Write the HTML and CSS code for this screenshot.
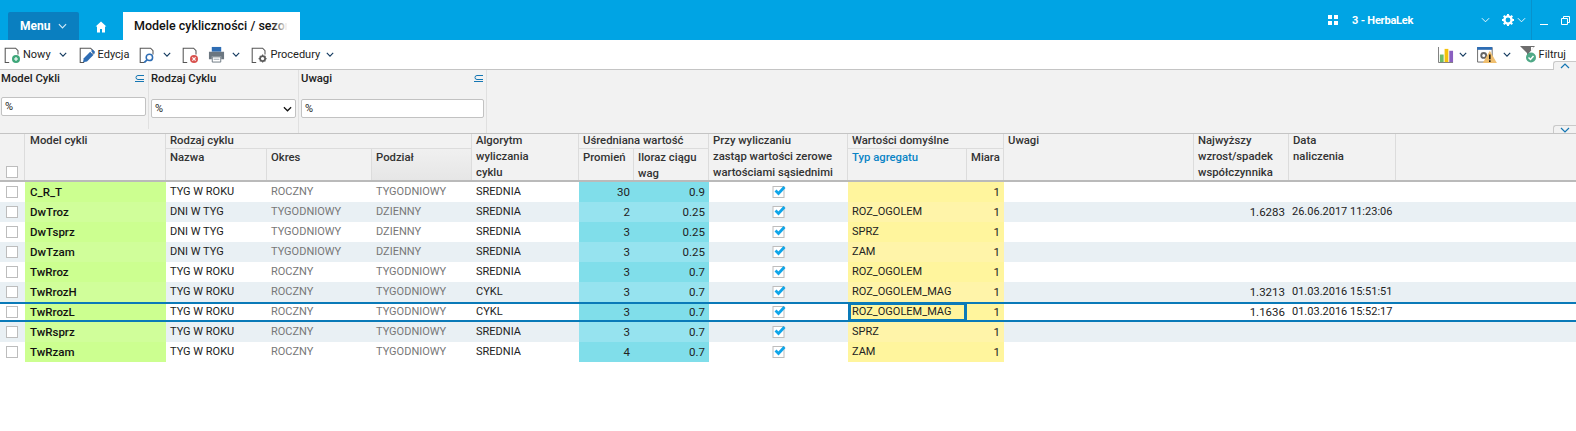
FILE: index.html
```html
<!DOCTYPE html>
<html lang="pl">
<head>
<meta charset="utf-8">
<title>Modele cykliczności / sezonowości</title>
<link rel="stylesheet" href="styles.css">
</head>
<body>
<svg class="defs" width="0" height="0" aria-hidden="true">
  <symbol id="chev" viewBox="0 0 10 6"><path d="M1 1l4 4 4-4" fill="none" stroke="#12395f" stroke-width="1.400"/></symbol>
  <symbol id="chev-w" viewBox="0 0 10 6"><path d="M1 1l4 4 4-4" fill="none" stroke="#fff" stroke-width="1"/></symbol>
  <symbol id="doc" viewBox="0 0 20 20"><path d="M6.500 19.500H1.500V1.500h13l3 3v5" fill="none" stroke="#555" stroke-width="1.300"/></symbol>
  <symbol id="chk" viewBox="0 0 14 14"><rect x="1" y="2.500" width="11" height="11" fill="#fff" stroke="#bdbdbd"/><path d="M3.500 6.500l3 3 6-6.500" fill="none" stroke="#0ea5e9" stroke-width="2.800"/></symbol>
  <symbol id="bars" viewBox="0 0 9 7"><path d="M9 .5H3a2 2 0 0 0 0 4h6M0 6.500h9" fill="none" stroke="#1476b3"/></symbol>
</svg>

<header class="topbar">
  <div class="menu-btn">Menu <svg class="ic-chev-m" viewBox="0 0 10 6"><path d="M1 1l4 4 4-4" fill="none" stroke="#cfe9f7" stroke-width="1.300"/></svg></div>
  <div class="home"><svg viewBox="0 0 12 12" width="12" height="12"><path d="M6 .5L.6 5.600H2V11.500h3V8h2v3.500h3V5.600h1.400z" fill="#fff"/></svg></div>
  <div class="tab"><span>Modele cykliczności / sezonowości</span></div>
  <div class="top-right">
    <svg class="apps" viewBox="0 0 10 10" width="10" height="10"><path d="M0 0h4v4H0zM6 0h4v4H6zM0 6h4v4H0zM6 6h4v4H6z" fill="#fff"/></svg>
    <span class="company">3 - HerbaLek</span>
    <svg class="chev-w1"><use href="#chev-w"/></svg>
    <svg class="gear" viewBox="0 0 12 12" width="12" height="12"><circle cx="6" cy="6" r="3.600" fill="none" stroke="#fff" stroke-width="2.400"/><path d="M6 0v2M6 10v2M0 6h2M10 6h2M1.700 1.700l1.400 1.400M8.900 8.900l1.400 1.400M1.700 10.300l1.400-1.400M8.900 3.100l1.400-1.400" stroke="#fff" stroke-width="2"/></svg>
    <svg class="chev-w2"><use href="#chev-w"/></svg>
    <div class="winctl">
      <span class="minimize"></span>
      <svg viewBox="0 0 9 9" width="9" height="9"><path d="M2.500 2.500V.5h6v6h-2M.5 2.500h6v6h-6z" fill="none" stroke="#fff"/></svg>
    </div>
  </div>
</header>

<nav class="toolbar">
  <div class="tb-left">
    <span class="tb-item"><svg class="ic" viewBox="0 0 20 20"><use href="#doc"/><circle cx="15" cy="15" r="5" fill="#3fa77a"/><path d="M15 12.500v5M12.500 15h5" stroke="#fff" stroke-width="1.400"/></svg>Nowy</span>
    <svg class="tb-chev c1"><use href="#chev"/></svg>
    <span class="tb-item i2"><svg class="ic" viewBox="0 0 20 20"><use href="#doc"/><path d="M5 19l1-5 8-8 4 4-8 8z" fill="#2e6db4"/><path d="M15 5l2-2 3 3-1 3z" fill="#2e6db4"/></svg>Edycja</span>
    <span class="tb-item i3"><svg class="ic" viewBox="0 0 20 20"><use href="#doc"/><circle cx="13" cy="13" r="4" fill="#fff" stroke="#2e6db4" stroke-width="1.900"/><path d="M10 16l-3.500 3.500" stroke="#2e6db4" stroke-width="2.200"/></svg></span>
    <svg class="tb-chev c3"><use href="#chev"/></svg>
    <span class="tb-item i4"><svg class="ic" viewBox="0 0 20 20"><use href="#doc"/><circle cx="15" cy="15" r="5" fill="#d9534f"/><path d="M13 13l4 4M17 13l-4 4" stroke="#fff" stroke-width="1.500"/></svg></span>
    <span class="tb-item i5"><svg class="ic printer" viewBox="0 0 18 18"><path d="M4 1h10v5H4z" fill="#2e6db4"/><path d="M1 6h16v8h-3v-3H4v3H1z" fill="#6b7680"/><path d="M4.500 11.500h9v5.500h-9z" fill="#fff" stroke="#6b7680"/><path d="M6 14h6" stroke="#9aa3ab"/></svg></span>
    <svg class="tb-chev c5"><use href="#chev"/></svg>
    <span class="tb-item i6"><svg class="ic" viewBox="0 0 20 20"><use href="#doc"/><circle cx="14.500" cy="14.500" r="3.200" fill="none" stroke="#5b5b5b" stroke-width="2.200"/><path d="M14.500 9.500v2M14.500 17.500v2M9.500 14.500h2M17.500 14.500h2M11 11l1.300 1.300M16.700 16.700l1.300 1.300M11 18l1.300-1.300M16.700 12.300l1.300-1.300" stroke="#5b5b5b" stroke-width="1.500"/></svg>Procedury</span>
    <svg class="tb-chev c6"><use href="#chev"/></svg>
  </div>
  <div class="tb-right">
    <svg class="ic chart" viewBox="0 0 17 17"><path d="M.5 0v16.500H16" fill="none" stroke="#777"/><path d="M2 8h4v8H2z" fill="#6dbb6a"/><path d="M7 2h4v14H7z" fill="#f4c20d"/><path d="M12 4h4v12h-4z" fill="#8a5fc0"/></svg>
    <svg class="tb-chev c7"><use href="#chev"/></svg>
    <svg class="ic warn" viewBox="0 0 21 17"><path d="M.5.500h15.500v15.500H.500z" fill="#fff" stroke="#666"/><path d="M0 0h16v3H0z" fill="#2e6db4"/><circle cx="7" cy="9" r="2.600" fill="none" stroke="#666" stroke-width="2"/><path d="M13.500 4L21 17H6z" fill="#efbe6e"/><path d="M13.500 8v5M13.500 14v2" stroke="#111" stroke-width="1.600"/></svg>
    <svg class="tb-chev c8"><use href="#chev"/></svg>
    <span class="filter"><svg class="ic funnel" viewBox="0 0 17 17"><path d="M0 0h15L9 7v2H7V7z" fill="#6d6d6d"/><path d="M11 1l3 0-3 4z" fill="#fff"/><circle cx="11" cy="11.500" r="5" fill="#4fa987"/><path d="M8.500 11.500l2 2 3-3.500" fill="none" stroke="#fff" stroke-width="1.500"/></svg>Filtruj</span>
  </div>
  <span class="scroll-tab up"><svg viewBox="0 0 10 6" width="10" height="6"><path d="M1 5l4-4 4 4" fill="none" stroke="#1476b3" stroke-width="1.200"/></svg></span>
</nav>

<section class="filters">
  <div class="fcol f1">
    <div class="flabel">Model Cykli<svg class="fbars" width="9" height="7"><use href="#bars"/></svg></div>
    <div class="finput">%</div>
  </div>
  <div class="fcol f2">
    <div class="flabel">Rodzaj Cyklu</div>
    <div class="finput low">%<svg class="fsel" viewBox="0 0 10 6" width="9" height="6"><path d="M1 1l4 4 4-4" fill="none" stroke="#111" stroke-width="1.400"/></svg></div>
  </div>
  <div class="fcol f3">
    <div class="flabel">Uwagi<svg class="fbars" width="9" height="7"><use href="#bars"/></svg></div>
    <div class="finput low">%</div>
  </div>
  <span class="scroll-tab down"><svg viewBox="0 0 10 6" width="10" height="6"><path d="M1 1l4 4 4-4" fill="none" stroke="#1476b3" stroke-width="1.200"/></svg></span>
</section>

<main class="grid">
  <div class="thead">
    <div class="th h-cb"><span class="box"></span></div>
    <div class="th h-model">Model cykli</div>
    <div class="th h-rodzaj">Rodzaj cyklu</div>
    <div class="th sub h-nazwa">Nazwa</div>
    <div class="th sub h-okres">Okres</div>
    <div class="th sub h-podzial">Podział</div>
    <div class="th h-algo">Algorytm<br>wyliczania<br>cyklu</div>
    <div class="th h-usr">Uśredniana wartość</div>
    <div class="th sub h-prom">Promień</div>
    <div class="th sub h-il">Iloraz ciągu<br>wag</div>
    <div class="th h-przy">Przy wyliczaniu<br>zastąp wartości zerowe<br>wartościami sąsiednimi</div>
    <div class="th h-wart">Wartości domyślne</div>
    <div class="th sub h-typ">Typ agregatu</div>
    <div class="th sub h-miara">Miara</div>
    <div class="th h-uw">Uwagi</div>
    <div class="th h-naj">Najwyższy<br>wzrost/spadek<br>współczynnika</div>
    <div class="th h-data">Data<br>naliczenia</div>
    <div class="th h-fill"></div>
  </div>

  <div class="row">
    <div class="td"><span class="box"></span></div><div class="td model">C_R_T</div><div class="td">TYG W ROKU</div><div class="td dim">ROCZNY</div><div class="td dim">TYGODNIOWY</div><div class="td">SREDNIA</div><div class="td teal num">30</div><div class="td teal num">0.9</div><div class="td ctr"><svg class="chk"><use href="#chk"/></svg></div><div class="td yel"></div><div class="td yel num">1</div><div class="td"></div><div class="td num"></div><div class="td"></div><div class="td"></div>
  </div>
  <div class="row">
    <div class="td"><span class="box"></span></div><div class="td model">DwTroz</div><div class="td">DNI W TYG</div><div class="td dim">TYGODNIOWY</div><div class="td dim">DZIENNY</div><div class="td">SREDNIA</div><div class="td teal num">2</div><div class="td teal num">0.25</div><div class="td ctr"><svg class="chk"><use href="#chk"/></svg></div><div class="td yel">ROZ_OGOLEM</div><div class="td yel num">1</div><div class="td"></div><div class="td num">1.6283</div><div class="td date">26.06.2017 11:23:06</div><div class="td"></div>
  </div>
  <div class="row">
    <div class="td"><span class="box"></span></div><div class="td model">DwTsprz</div><div class="td">DNI W TYG</div><div class="td dim">TYGODNIOWY</div><div class="td dim">DZIENNY</div><div class="td">SREDNIA</div><div class="td teal num">3</div><div class="td teal num">0.25</div><div class="td ctr"><svg class="chk"><use href="#chk"/></svg></div><div class="td yel">SPRZ</div><div class="td yel num">1</div><div class="td"></div><div class="td num"></div><div class="td"></div><div class="td"></div>
  </div>
  <div class="row">
    <div class="td"><span class="box"></span></div><div class="td model">DwTzam</div><div class="td">DNI W TYG</div><div class="td dim">TYGODNIOWY</div><div class="td dim">DZIENNY</div><div class="td">SREDNIA</div><div class="td teal num">3</div><div class="td teal num">0.25</div><div class="td ctr"><svg class="chk"><use href="#chk"/></svg></div><div class="td yel">ZAM</div><div class="td yel num">1</div><div class="td"></div><div class="td num"></div><div class="td"></div><div class="td"></div>
  </div>
  <div class="row">
    <div class="td"><span class="box"></span></div><div class="td model">TwRroz</div><div class="td">TYG W ROKU</div><div class="td dim">ROCZNY</div><div class="td dim">TYGODNIOWY</div><div class="td">SREDNIA</div><div class="td teal num">3</div><div class="td teal num">0.7</div><div class="td ctr"><svg class="chk"><use href="#chk"/></svg></div><div class="td yel">ROZ_OGOLEM</div><div class="td yel num">1</div><div class="td"></div><div class="td num"></div><div class="td"></div><div class="td"></div>
  </div>
  <div class="row">
    <div class="td"><span class="box"></span></div><div class="td model">TwRrozH</div><div class="td">TYG W ROKU</div><div class="td dim">ROCZNY</div><div class="td dim">TYGODNIOWY</div><div class="td">CYKL</div><div class="td teal num">3</div><div class="td teal num">0.7</div><div class="td ctr"><svg class="chk"><use href="#chk"/></svg></div><div class="td yel">ROZ_OGOLEM_MAG</div><div class="td yel num">1</div><div class="td"></div><div class="td num">1.3213</div><div class="td date">01.03.2016 15:51:51</div><div class="td"></div>
  </div>
  <div class="row selected">
    <div class="td"><span class="box"></span></div><div class="td model">TwRrozL</div><div class="td">TYG W ROKU</div><div class="td dim">ROCZNY</div><div class="td dim">TYGODNIOWY</div><div class="td">CYKL</div><div class="td teal num">3</div><div class="td teal num">0.7</div><div class="td ctr"><svg class="chk"><use href="#chk"/></svg></div><div class="td yel focus">ROZ_OGOLEM_MAG</div><div class="td yel num">1</div><div class="td"></div><div class="td num">1.1636</div><div class="td date">01.03.2016 15:52:17</div><div class="td"></div>
  </div>
  <div class="row">
    <div class="td"><span class="box"></span></div><div class="td model">TwRsprz</div><div class="td">TYG W ROKU</div><div class="td dim">ROCZNY</div><div class="td dim">TYGODNIOWY</div><div class="td">SREDNIA</div><div class="td teal num">3</div><div class="td teal num">0.7</div><div class="td ctr"><svg class="chk"><use href="#chk"/></svg></div><div class="td yel">SPRZ</div><div class="td yel num">1</div><div class="td"></div><div class="td num"></div><div class="td"></div><div class="td"></div>
  </div>
  <div class="row last">
    <div class="td"><span class="box"></span></div><div class="td model">TwRzam</div><div class="td">TYG W ROKU</div><div class="td dim">ROCZNY</div><div class="td dim">TYGODNIOWY</div><div class="td">SREDNIA</div><div class="td teal num">4</div><div class="td teal num">0.7</div><div class="td ctr"><svg class="chk"><use href="#chk"/></svg></div><div class="td yel">ZAM</div><div class="td yel num">1</div><div class="td"></div><div class="td num"></div><div class="td"></div><div class="td"></div>
  </div>
</main>
</body>
</html>
```
FILE: styles.css
```css
* { box-sizing: border-box; }
html, body { margin: 0; padding: 0; }
body {
  width: 1576px;
  height: 431px;
  overflow: hidden;
  background: #fff;
  font-family: Roboto, "Liberation Sans", sans-serif;
  font-size: 12px;
  color: #111;
}
.defs { display: block; height: 0; }

/* top bar */
.topbar {
  height: 40px;
  background: #00a4e4;
  display: flex;
  align-items: flex-end;
  padding-left: 8px;
}
.menu-btn {
  width: 71px;
  height: 28px;
  background: #0a7fc0;
  color: #fff;
  font-weight: 700;
  font-size: 12px;
  display: flex;
  align-items: center;
  padding-left: 12px;
  gap: 8px;
  border-radius: 2px 2px 0 0;
}
.ic-chev-m { width: 9px; height: 6px; }
.home {
  width: 44px;
  height: 28px;
  display: flex;
  align-items: center;
  justify-content: center;
  padding-top: 1px;
}
.tab {
  position: relative;
  width: 177px;
  height: 28px;
  background: #fff;
  padding: 0 0 0 11px;
  font-weight: 500;
  font-size: 12.500px;
  line-height: 27px;
  white-space: nowrap;
  overflow: hidden;
}
.tab::after {
  content: "";
  position: absolute;
  right: 0;
  top: 0;
  bottom: 0;
  width: 28px;
  background: linear-gradient(to right, rgba(255,255,255,0), #fff 55%);
}
.top-right {
  margin-left: auto;
  height: 40px;
  display: flex;
  align-items: center;
  color: #fff;
}
.company { font-weight: 700; font-size: 11px; letter-spacing: -.2px; width: 129px; margin-left: 14px; }
.chev-w1 { width: 9px; height: 6px; }
.gear { margin-left: 12px; }
.chev-w2 { width: 9px; height: 6px; margin-left: 3px; }
.winctl {
  height: 40px;
  margin-left: 5px;
  width: 45px;
  border-left: 1px solid #0892cc;
  display: flex;
  align-items: center;
  padding-left: 8px;
  gap: 13px;
}
.minimize { width: 8px; height: 1px; background: #fff; margin-top: 9px; }

/* toolbar */
.toolbar {
  position: relative;
  height: 30px;
  background: #fff;
  border-bottom: 1px solid #c4c4c4;
  display: flex;
  justify-content: space-between;
  align-items: center;
  padding-left: 4px;
}
.tb-left, .tb-right { display: flex; align-items: center; height: 29px; }
.tb-item { display: flex; align-items: center; gap: 3px; color: #222; font-size: 11px; }
.ic { width: 15px; height: 15px; display: block; }
.tb-item .ic { width: 16px; height: 16px; }
.tb-chev { width: 8px; height: 5px; display: block; }
.c1 { margin-left: 8px; }
.i2 { margin-left: 12px; }
.i3 { margin-left: 10px; }
.c3 { margin-left: 8px; }
.i4 { margin-left: 11px; }
.i5 { margin-left: 10px; }
.tb-item .printer { width: 17px; height: 17px; }
.c5 { margin-left: 7px; }
.i6 { margin-left: 11px; }
.c6 { margin-left: 6px; }
.tb-right { padding-right: 10px; }
.chart { width: 16px; height: 16px; }
.c7 { margin-left: 5px; }
.warn { width: 20px; height: 16px; margin-left: 10px; }
.c8 { margin-left: 6px; }
.filter { display: flex; align-items: center; gap: 2px; margin-left: 9px; color: #222; font-size: 11px; }
.funnel { width: 17px; height: 17px; }
.scroll-tab {
  position: absolute;
  right: 0;
  width: 23px;
  background: #f2f2f2;
  border: 1px solid #c9c9c9;
  border-right: 0;
  border-bottom: 0;
  border-radius: 3px 0 0 0;
  display: flex;
  align-items: center;
  justify-content: center;
}
.scroll-tab.up { bottom: -1px; height: 9px; }
.scroll-tab.down { bottom: 0; height: 8px; }

/* filter panel */
.filters {
  position: relative;
  z-index: 1;
  height: 64px;
  background: #f2f2f2;
  border-bottom: 1px solid #c4c4c4;
  display: flex;
}
.fcol { position: relative; border-right: 1px solid #e0e0e0; padding: 1px 2px 0 1px; }
.f1 { width: 149px; height: 59px; }
.f2 { width: 150px; padding-left: 2px; padding-right: 2px; }
.f3 { width: 188px; padding-left: 2px; padding-right: 2px; }
.flabel {
  height: 15px;
  line-height: 15px;
  font-weight: 500;
  font-size: 11.300px;
  color: #222;
  display: flex;
  justify-content: space-between;
  align-items: center;
  padding-right: 1px;
}
.fbars { margin-right: 1px; width: 9px; height: 7px; }
.finput {
  position: relative;
  height: 19px;
  margin-top: 11px;
  background: #fff;
  border: 1px solid #c2c2c2;
  border-radius: 2px;
  font-size: 11px;
  line-height: 17px;
  padding-left: 3px;
  color: #222;
}
.finput.low { margin-top: 13px; }
.fsel { position: absolute; right: 3px; top: 6px; }
.f3 .flabel { padding-right: 0; }

/* grid */
.thead, .row {
  display: grid;
  grid-template-columns: 25px 141px 101px 105px 100px 107px 55px 75px 139px 119px 37px 190px 95px 107px 1fr;
}
.thead {
  grid-template-rows: 16px 16px 15px;
  margin-top: -1px;
  background: #f2f2f2;
  border-bottom: 2px solid #bababa;
  height: 49px;
  font-size: 11.300px;
}
.th {
  padding: 0 0 0 4px;
  font-weight: 500;
  line-height: 16px;
  color: #333;
  border-right: 1px solid #dcdcdc;
  white-space: nowrap;
  overflow: hidden;
}
.th.sub { padding-top: 1px; }
.h-cb { grid-column: 1; grid-row: 1 / 4; display: flex; align-items: flex-end; padding: 0 0 2px 6px; }
.h-model { grid-column: 2; grid-row: 1 / 4; padding-left: 5px; }
.h-rodzaj { grid-column: 3 / 6; grid-row: 1; border-bottom: 1px solid #dcdcdc; }
.h-nazwa { grid-column: 3; grid-row: 2 / 4; }
.h-okres { grid-column: 4; grid-row: 2 / 4; }
.h-podzial { grid-column: 5; grid-row: 2 / 4; background: linear-gradient(to bottom, #f0f0f0, #e6e6e6); }
.h-algo { grid-column: 6; grid-row: 1 / 4; }
.h-usr { grid-column: 7 / 9; grid-row: 1; border-bottom: 1px solid #dcdcdc; }
.h-prom { grid-column: 7; grid-row: 2 / 4; }
.h-il { grid-column: 8; grid-row: 2 / 4; }
.h-przy { grid-column: 9; grid-row: 1 / 4; }
.h-wart { grid-column: 10 / 12; grid-row: 1; border-bottom: 1px solid #dcdcdc; }
.h-typ { grid-column: 10; grid-row: 2 / 4; color: #0a84c6; }
.h-miara { grid-column: 11; grid-row: 2 / 4; }
.h-uw { grid-column: 12; grid-row: 1 / 4; }
.h-naj { grid-column: 13; grid-row: 1 / 4; }
.h-data { grid-column: 14; grid-row: 1 / 4; }
.h-fill { grid-column: 15; grid-row: 1 / 4; border-right: 0; }

.row { height: 20px; position: relative; }
.row:nth-child(odd) { background: #e9f0f4; }
.td {
  height: 20px;
  line-height: 20px;
  padding: 0 0 0 4px;
  font-size: 11px;
  white-space: nowrap;
  overflow: hidden;
  color: #222;
}
.dim { color: #777; }
.date { padding-left: 3px; }
.model { background: #ccff90; font-weight: 500; font-size: 11.500px; color: #111; padding-left: 5px; }
.row:nth-child(odd) .model { background: #d0fe9a; }
.teal { background: #80deea; }
.row:nth-child(odd) .teal { background: #96e3ef; }
.yel { background: #fff59d; }
.row:nth-child(odd) .yel { background: #fff4a9; }
.num { text-align: right; padding: 0 4px 0 0; font-size: 11.500px; }
.ctr { padding: 0; display: flex; align-items: flex-start; justify-content: center; }
.chk { width: 14px; height: 14px; margin-top: 2px; display: block; }
.box {
  display: block;
  width: 12px;
  height: 12px;
  background: #fff;
  border: 1px solid #bdbdbd;
}
.row .td:first-child { padding: 4px 0 0 6px; }
.selected { background: #fff; }
.selected::after {
  content: "";
  position: absolute;
  inset: 0;
  border-top: 2px solid #0a7ab8;
  border-bottom: 2px solid #0a7ab8;
  pointer-events: none;
}
.focus { box-shadow: inset 0 0 0 3px #0a7ab8; }
```
